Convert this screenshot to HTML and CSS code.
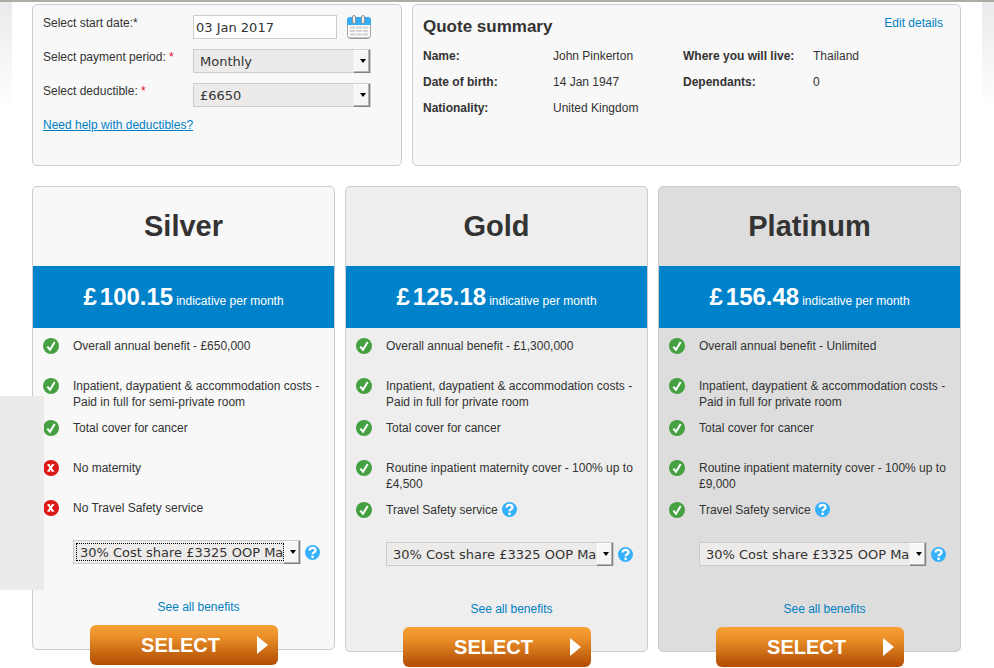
FILE: index.html
```html
<!DOCTYPE html>
<html lang="en">
<head>
    <meta charset="utf-8">
    <title>Your quote</title>
    <link rel="stylesheet" href="styles.css">
</head>
<body>
    <!-- shared icons -->
    <svg class="sprite" aria-hidden="true">
        <symbol id="tick" viewBox="0 0 16 16">
            <circle cx="8" cy="8" r="8" fill="#45a041"/>
            <path d="M4.300 8.600l2.700 3.100L11.700 4" fill="none" stroke="#fff" stroke-width="2"/>
        </symbol>
        <symbol id="cross" viewBox="0 0 16 16">
            <circle cx="8" cy="8" r="8" fill="#dc1a17"/>
            <path d="M5.300 4.500l4.600 6.700M10.200 4.500l-4.800 6.700" fill="none" stroke="#fff" stroke-width="2"/>
            <path d="M4.300 4.800h2.700M8.600 4.800h2.700M4.300 11.100h2.700M8.600 11.100h2.700" stroke="#fff" stroke-width="1"/>
        </symbol>
        <symbol id="help" viewBox="0 0 15 15">
            <circle cx="7.500" cy="7.500" r="7.500" fill="#35b1fc"/>
            <path d="M4.600 5.600c0-3.600 6-3.500 5.900-.2 0 1.900-2.900 1.800-2.900 3.900" fill="none" stroke="#fff" stroke-width="2.300"/>
            <circle cx="7.600" cy="11.800" r="1.400" fill="#fff"/>
        </symbol>
    </svg>

    <div class="side-tab"></div>

    <div class="page">
        <div class="top">
            <form class="card options">
                <div class="row">
                    <label for="start-date">Select start date:*</label>
                    <input type="text" id="start-date" value="03 Jan 2017">
                    <button type="button" class="calendar" aria-label="Choose date">
                        <svg width="24" height="24" viewBox="0 0 24 24">
                            <rect x="0.500" y="2.500" width="23" height="21" rx="3" fill="#fafafa" stroke="#a3a3a3"/>
                            <path d="M0 10V5a3 3 0 0 1 3-3h18a3 3 0 0 1 3 3v5z" fill="#36acf3"/>
                            <path d="M2 23h20" stroke="#8d8d8d"/>
                            <path d="M3 12.500h5M9 12.500h6M16 12.500h5M3 16h5M9 16h6M16 16h5M3 19.500h5M9 19.500h6M16 19.500h5" stroke="#d2d2d2" stroke-width="2"/>
                            <rect x="5.500" y="0.500" width="3" height="8" rx="1.500" fill="#f2f2f2" stroke="#8c8c8c"/>
                            <rect x="14.500" y="0.500" width="3" height="8" rx="1.500" fill="#f2f2f2" stroke="#8c8c8c"/>
                        </svg>
                    </button>
                </div>
                <div class="row">
                    <label for="period">Select payment period: <span class="required">*</span></label>
                    <div class="dropdown">
                        <select id="period"><option>Monthly</option></select>
                    </div>
                </div>
                <div class="row">
                    <label for="deductible">Select deductible: <span class="required">*</span></label>
                    <div class="dropdown">
                        <select id="deductible"><option>£6650</option></select>
                    </div>
                </div>
                <a class="help-link" href="#">Need help with deductibles?</a>
            </form>

            <div class="card summary">
                <div class="summary-head">
                    <h2>Quote summary</h2>
                    <a href="#">Edit details</a>
                </div>
                <dl>
                    <dt>Name:</dt>
                    <dd>John Pinkerton</dd>
                    <dt>Where you will live:</dt>
                    <dd>Thailand</dd>
                    <dt>Date of birth:</dt>
                    <dd>14 Jan 1947</dd>
                    <dt>Dependants:</dt>
                    <dd>0</dd>
                    <dt>Nationality:</dt>
                    <dd>United Kingdom</dd>
                </dl>
            </div>
        </div>

        <div class="plans">
            <div class="card plan silver">
                <h1>Silver</h1>
                <p class="price"><strong>£</strong><strong class="amount">100.15</strong><span>indicative per month</span></p>
                <ul>
                    <li><svg class="icon"><use href="#tick"/></svg><span>Overall annual benefit - £650,000</span></li>
                    <li><svg class="icon"><use href="#tick"/></svg><span>Inpatient, daypatient &amp; accommodation costs - Paid in full for semi-private room</span></li>
                    <li><svg class="icon"><use href="#tick"/></svg><span>Total cover for cancer</span></li>
                    <li><svg class="icon"><use href="#cross"/></svg><span>No maternity</span></li>
                    <li><svg class="icon"><use href="#cross"/></svg><span>No Travel Safety service</span></li>
                </ul>
                <div class="cost-share">
                    <div class="dropdown focused">
                        <select aria-label="Silver cost share"><option>30% Cost share £3325 OOP Max</option></select>
                        <span class="focus-ring"></span>
                    </div>
                    <svg class="help"><use href="#help"/></svg>
                </div>
                <a class="benefits" href="#">See all benefits</a>
                <button type="button" class="select-btn">SELECT
                    <svg width="11" height="18" viewBox="0 0 11 18"><path d="M0 0l11 9L0 18z" fill="#fff"/></svg>
                </button>
            </div>

            <div class="card plan gold">
                <h1>Gold</h1>
                <p class="price"><strong>£</strong><strong class="amount">125.18</strong><span>indicative per month</span></p>
                <ul>
                    <li><svg class="icon"><use href="#tick"/></svg><span>Overall annual benefit - £1,300,000</span></li>
                    <li><svg class="icon"><use href="#tick"/></svg><span>Inpatient, daypatient &amp; accommodation costs - Paid in full for private room</span></li>
                    <li><svg class="icon"><use href="#tick"/></svg><span>Total cover for cancer</span></li>
                    <li><svg class="icon"><use href="#tick"/></svg><span>Routine inpatient maternity cover - 100% up to £4,500</span></li>
                    <li><svg class="icon"><use href="#tick"/></svg><span>Travel Safety service</span><svg class="help"><use href="#help"/></svg></li>
                </ul>
                <div class="cost-share">
                    <div class="dropdown">
                        <select aria-label="Gold cost share"><option>30% Cost share £3325 OOP Max</option></select>
                    </div>
                    <svg class="help"><use href="#help"/></svg>
                </div>
                <a class="benefits" href="#">See all benefits</a>
                <button type="button" class="select-btn">SELECT
                    <svg width="11" height="18" viewBox="0 0 11 18"><path d="M0 0l11 9L0 18z" fill="#fff"/></svg>
                </button>
            </div>

            <div class="card plan platinum">
                <h1>Platinum</h1>
                <p class="price"><strong>£</strong><strong class="amount">156.48</strong><span>indicative per month</span></p>
                <ul>
                    <li><svg class="icon"><use href="#tick"/></svg><span>Overall annual benefit - Unlimited</span></li>
                    <li><svg class="icon"><use href="#tick"/></svg><span>Inpatient, daypatient &amp; accommodation costs - Paid in full for private room</span></li>
                    <li><svg class="icon"><use href="#tick"/></svg><span>Total cover for cancer</span></li>
                    <li><svg class="icon"><use href="#tick"/></svg><span>Routine inpatient maternity cover - 100% up to £9,000</span></li>
                    <li><svg class="icon"><use href="#tick"/></svg><span>Travel Safety service</span><svg class="help"><use href="#help"/></svg></li>
                </ul>
                <div class="cost-share">
                    <div class="dropdown">
                        <select aria-label="Platinum cost share"><option>30% Cost share £3325 OOP Max</option></select>
                    </div>
                    <svg class="help"><use href="#help"/></svg>
                </div>
                <a class="benefits" href="#">See all benefits</a>
                <button type="button" class="select-btn">SELECT
                    <svg width="11" height="18" viewBox="0 0 11 18"><path d="M0 0l11 9L0 18z" fill="#fff"/></svg>
                </button>
            </div>
        </div>
    </div>
</body>
</html>
```
FILE: styles.css
```css
* {
    box-sizing: border-box;
}

body {
    margin: 0;
    padding: 0 12px;
    border-top: 2px solid #aeada5;
    background: linear-gradient(#e8eaec, #fff 110px) no-repeat;
    font-family: "Liberation Sans", Arial, sans-serif;
    font-size: 12px;
    line-height: 16px;
    color: #333;
}

a {
    color: #0080c2;
    text-decoration: none;
}

h1, h2, p, ul, dl, dd {
    margin: 0;
    padding: 0;
}

.sprite {
    position: absolute;
    width: 0;
    height: 0;
}

.side-tab {
    position: fixed;
    left: 0;
    top: 396px;
    width: 44px;
    height: 194px;
    background: #ecebea;
    z-index: 1;
}

.page {
    background: #fff;
    padding: 2px 21px 16px 20px;
}

.card {
    border: 1px solid #ccc;
    border-radius: 5px;
    background: #f8f8f8;
}

/* options and summary */
.top {
    display: grid;
    grid-template-columns: 370px 1fr;
    gap: 10px;
    margin-bottom: 20px;
}

.options {
    padding: 10px 10px 32px;
}

.row {
    display: flex;
    align-items: flex-start;
    margin-bottom: 10px;
}

.row label {
    width: 150px;
}

.required {
    color: #e0102a;
}

input, select {
    height: 24px;
    border: 1px solid #ccc;
    border-radius: 0;
    font-family: "DejaVu Sans", sans-serif;
    font-size: 13px;
    color: #333;
}

input {
    width: 144px;
    padding: 0 2px;
    background: #fff;
}

.calendar {
    margin-left: 10px;
    padding: 0;
    border: 0;
    background: none;
    height: 24px;
    cursor: pointer;
}

.dropdown {
    position: relative;
    width: 178px;
}

.dropdown select {
    display: block;
    appearance: none;
    width: 100%;
    padding: 0 14px 0 6px;
    background: #edebe9;
    outline: none;
}

/* bevelled arrow button */
.dropdown::before {
    content: "";
    position: absolute;
    right: 1px;
    top: 1px;
    width: 15px;
    height: 22px;
    background: #f7f6f5;
    border-right: 1px solid #808080;
    border-bottom: 1px solid #808080;
    box-shadow: inset -1px -1px #b5b5b5, inset 1px 1px #fff;
    pointer-events: none;
}

.dropdown::after {
    content: "";
    position: absolute;
    right: 5px;
    top: 10px;
    border: 3px solid transparent;
    border-top: 4px solid #000;
    border-bottom: 0;
    pointer-events: none;
}

.focus-ring {
    position: absolute;
    left: 3px;
    top: 3px;
    right: 17px;
    bottom: 3px;
    border: 1px dotted #000;
    pointer-events: none;
}

.help-link {
    text-decoration: underline;
}

.summary {
    padding: 10px;
}

.summary-head {
    display: flex;
    justify-content: space-between;
    align-items: flex-start;
    padding-right: 7px;
    margin-bottom: 9px;
}

.summary-head h2 {
    font-size: 17px;
    line-height: 24px;
}

.summary dl {
    display: grid;
    grid-template-columns: repeat(4, 130px);
    row-gap: 10px;
}

.summary dt {
    font-weight: bold;
}

/* plans */
.plans {
    display: grid;
    grid-template-columns: repeat(3, 1fr);
    gap: 10px;
    align-items: start;
}

.plan {
    display: flex;
    flex-direction: column;
}

.gold {
    background: #eee;
}

.platinum {
    background: #ddd;
}

.plan h1 {
    padding: 19px 0 20px;
    font-size: 29px;
    line-height: 40px;
    text-align: center;
}

.price {
    display: flex;
    justify-content: center;
    align-items: baseline;
    gap: 3px;
    padding: 15px 0;
    background: #0082ca;
    color: #fff;
}

.price strong {
    font-size: 24px;
    line-height: 32px;
}

.plan ul {
    list-style: none;
    padding: 10px 9px 0 10px;
}

.plan li {
    display: flex;
    align-items: flex-start;
    min-height: 30px;
    margin-bottom: 10px;
}

.icon {
    flex: none;
    width: 16px;
    height: 16px;
    margin-right: 14px;
}

.help {
    flex: none;
    width: 15px;
    height: 15px;
    margin-left: 4px;
}

.cost-share {
    display: flex;
    align-items: center;
    padding: 0 10px 0 40px;
}

.cost-share .dropdown {
    width: 228px;
}

.benefits {
    margin: 35px 10px 10px 40px;
    text-align: center;
}

/* hangs over the bottom edge of the card */
.select-btn {
    position: relative;
    align-self: center;
    width: 188px;
    height: 40px;
    margin-bottom: -16px;
    padding: 0 6px 0 0;
    border: 0;
    border-radius: 6px;
    background: linear-gradient(#f7a135, #ea8f29 30%, #c4620f 75%, #b34c02);
    color: #fff;
    font-family: "Liberation Sans", Arial, sans-serif;
    font-size: 20px;
    font-weight: bold;
    cursor: pointer;
}

.select-btn svg {
    position: absolute;
    right: 10px;
    top: 11px;
}
```
